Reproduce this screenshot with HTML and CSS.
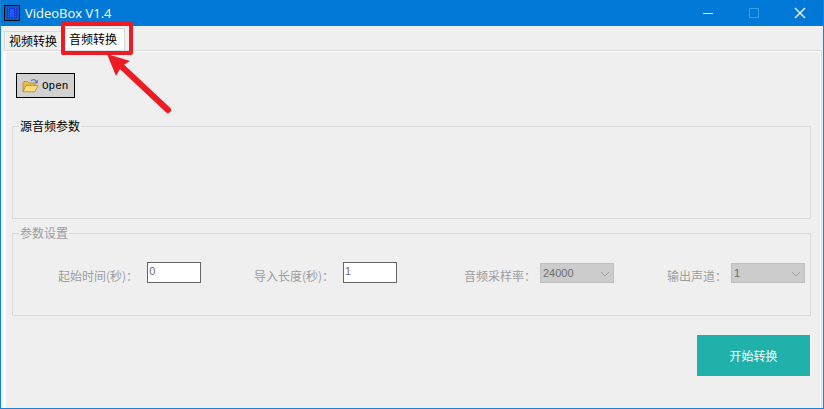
FILE: index.html
```html
<!DOCTYPE html>
<html lang="zh-CN">
<head>
    <meta charset="UTF-8">
    <meta name="viewport" content="width=device-width, initial-scale=1.0">
    <title>VideoBox V1.4</title>
    <link rel="stylesheet" href="styles.css">
</head>
<body>
    <div class="window">
        <header class="titlebar">
            <svg class="app-icon" width="16" height="16" viewBox="0 0 16 16">
                <rect x="0.5" y="0.5" width="15" height="15" fill="#0a5cbc" stroke="#05070c"/>
                <rect x="3" y="3" width="10" height="10" fill="#1638d8"/>
                <rect x="6" y="4" width="4" height="8" fill="#2458ff"/>
                <path d="M4.5 3v10M11.5 3v10" stroke="#0a78e8" stroke-dasharray="1 1"/>
            </svg>
            <h1 class="title">VideoBox V1.4</h1>
            <div class="window-buttons">
                <button type="button" class="window-button" aria-label="最小化">
                    <svg width="12" height="12" viewBox="0 0 12 12"><path d="M1 6.5h10" stroke="#fff"/></svg>
                </button>
                <button type="button" class="window-button" aria-label="最大化" disabled>
                    <svg width="12" height="12" viewBox="0 0 12 12"><rect x="1.5" y="1.5" width="9" height="9" fill="none" stroke="#3d9be8"/></svg>
                </button>
                <button type="button" class="window-button" aria-label="关闭">
                    <svg width="12" height="12" viewBox="0 0 12 12"><path d="M1 1l10 10M11 1L1 11" stroke="#fff" stroke-width="1.3"/></svg>
                </button>
            </div>
        </header>

        <nav class="tabs" role="tablist">
            <button type="button" class="tab" role="tab">视频转换</button>
            <button type="button" class="tab active" role="tab" aria-selected="true">音频转换</button>
            <svg class="pointer" width="116" height="96" viewBox="0 0 116 96">
                <rect x="5" y="4" width="68" height="29" fill="none" stroke="#ed1c24" stroke-width="4" stroke-linejoin="round"/>
                <path d="M62 45L110 90" stroke="#ed1c24" stroke-width="6" stroke-linecap="round"/>
                <path d="M49 34L72 41L64 46L62 49L58 56Z" fill="#ed1c24"/>
            </svg>
        </nav>

        <main class="pane">
            <button type="button" class="open-button">
                <svg width="17" height="15" viewBox="0 0 17 15">
                    <path d="M1 13.5V4.5l1-1h3.5l1.5 1.5h6v3" fill="#e9bb4c" stroke="#b08a34" stroke-width="0.8"/>
                    <path d="M1 13.8L4 7.5h12l-3 6.3z" fill="#fbdc78" stroke="#b08a34" stroke-width="0.8"/>
                    <path d="M9 3c1.5-2 4-2 5.2 0.3" fill="none" stroke="#5b7fa8" stroke-width="1.2"/>
                    <path d="M15.8 1.5v3.7h-3.6z" fill="#5b7fa8"/>
                </svg>
                Open
            </button>

            <fieldset class="group source">
                <legend>源音频参数</legend>
            </fieldset>

            <fieldset class="group settings" disabled>
                <legend>参数设置</legend>
                <div class="fields">
                    <div class="field timed">
                        <label for="start">起始时间(秒)：</label>
                        <input type="text" id="start" value="0">
                    </div>
                    <div class="field timed">
                        <label for="length">导入长度(秒)：</label>
                        <input type="text" id="length" value="1">
                    </div>
                    <div class="field">
                        <label for="rate">音频采样率：</label>
                        <span class="select">
                            <select id="rate"><option>24000</option></select>
                            <svg width="10" height="6" viewBox="0 0 10 6"><path d="M1 1l4 4l4-4" fill="none" stroke="#a0a0a0"/></svg>
                        </span>
                    </div>
                    <div class="field">
                        <label for="channel">输出声道：</label>
                        <span class="select">
                            <select id="channel"><option>1</option></select>
                            <svg width="10" height="6" viewBox="0 0 10 6"><path d="M1 1l4 4l4-4" fill="none" stroke="#a0a0a0"/></svg>
                        </span>
                    </div>
                </div>
            </fieldset>

            <button type="button" class="start-button">开始转换</button>
        </main>
    </div>
</body>
</html>
```

FILE: styles.css
```css
* { box-sizing: border-box; }
body { margin: 0; font-family: "Noto Sans CJK SC", sans-serif; font-size: 12px; line-height: 16px; color: #000; background: #efefef; }
button, input, select { font: inherit; color: inherit; margin: 0; border-radius: 0; }
svg { display: block; }

.window { display: flex; flex-direction: column; min-height: 100vh; border: 1px solid #1883d7; border-top: none; background: #efefef; }

.titlebar { display: flex; align-items: center; height: 26px; padding-left: 3px; background: #0078d7; color: #fff; }
.title { flex: 1; margin: 0 0 0 5px; font-family: "Open Sans", sans-serif; font-size: 13px; font-weight: normal; }
.window-buttons { display: flex; }
.window-button { display: flex; align-items: center; justify-content: center; width: 46px; height: 26px; padding: 0; border: none; background: none; }

.tabs { position: relative; display: flex; align-items: flex-end; height: 24px; padding-left: 3px; }
.tab { height: 19px; padding: 0 4px; border: 1px solid #dadada; border-bottom: none; background: #efefef; }
.tab.active { height: 22px; margin-left: -1px; padding: 0 7px 2px; background: #fff; }
.pointer { position: absolute; left: 57px; top: -6px; }

.pane { flex: 1; display: flex; flex-direction: column; margin: 0 1px 0 2px; padding: 22px 10px 0 6px; border: 1px solid #dadada; border-left: 3px solid #fff; border-bottom: none; box-shadow: inset 0 1px #fff, inset -1px 0 #fff; }

.open-button { display: flex; align-items: center; align-self: flex-start; gap: 3px; height: 25px; margin-left: 4px; padding: 0 6px 0 5px; border: 1px solid #000; background: #d1d1d1; font-family: "Liberation Mono", monospace; font-size: 11px; }

.group { min-width: 0; margin: 0; padding: 0 5px 0 45px; border: 1px solid #dadada; }
.group legend { margin-left: -39px; padding: 0 1px; }
.source { height: 101px; margin-top: 20px; }
.settings { height: 91px; margin-top: 6px; color: #9d9d9d; }

.fields { display: grid; grid-template-columns: 196fr 210fr 203fr 138fr; padding-top: 21px; }
.field { display: flex; align-items: flex-end; gap: 4px; white-space: nowrap; }
.field.timed { gap: 9px; }
.field label { line-height: 14px; }
.field input { width: 54px; height: 21px; padding: 0 1px 4px; border: 1px solid #646464; background: #fff; color: #6d6d6d; font-family: "Liberation Sans", sans-serif; font-size: 11px; }

.select { position: relative; }
.select select { display: block; width: 74px; height: 20px; padding: 0 2px; border: 1px solid #bfbfbf; background: #ccc; color: #6d6d6d; opacity: 1; appearance: none; font-family: "Liberation Sans", sans-serif; font-size: 11px; }
.select svg { position: absolute; right: 4px; top: 8px; pointer-events: none; }

.start-button { align-self: flex-end; width: 113px; height: 41px; margin: 19px 1px 0 0; border: none; background: #20b2aa; color: #fff; }
```
